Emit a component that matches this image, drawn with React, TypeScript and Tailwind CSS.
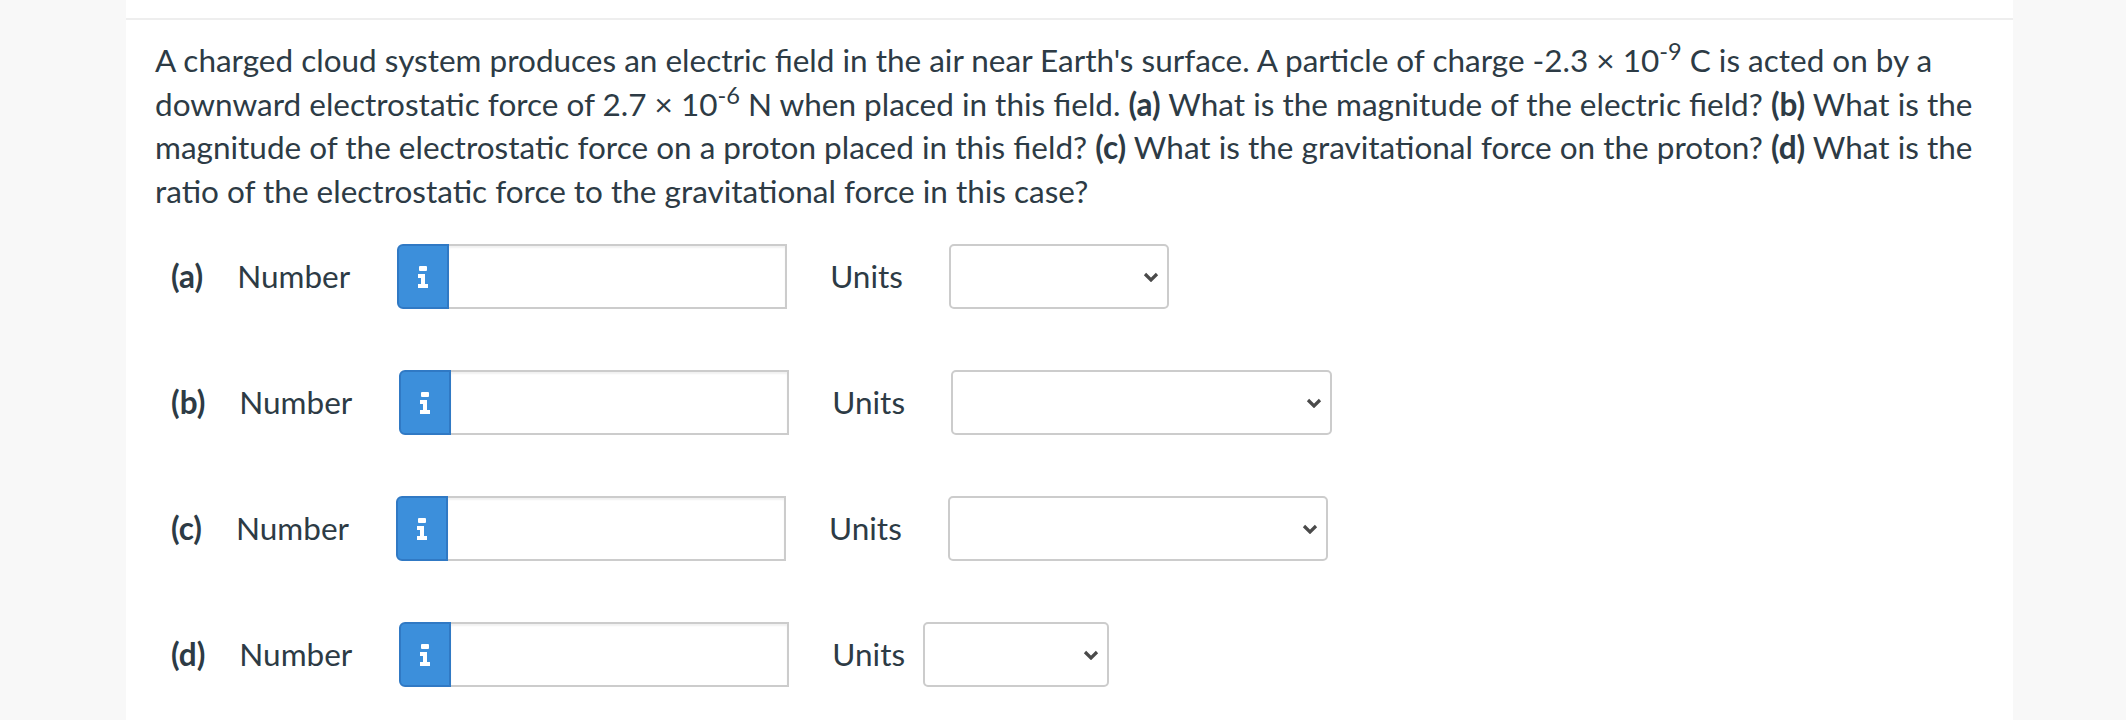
import React from "react";

interface AnswerRow {
  label: string;
  selectWidth: string;
  selectGap: string;
}

const rows: AnswerRow[] = [
  { label: "(a)", selectWidth: "w-[220px]", selectGap: "ml-[46px]" },
  { label: "(b)", selectWidth: "w-[381px]", selectGap: "ml-[46px]" },
  { label: "(c)", selectWidth: "w-[380px]", selectGap: "ml-[46px]" },
  { label: "(d)", selectWidth: "w-[186px]", selectGap: "ml-[18px]" },
];

function InfoGlyph() {
  return (
    <svg width="10" height="22" viewBox="0 0 10 22" fill="#ffffff">
      <rect x="1" y="0" width="8" height="5" rx="1" />
      <path d="M0 8 H7 V18 H10 V22 H0 V18 H3 V12 H0 Z" />
    </svg>
  );
}

function Chevron() {
  return (
    <svg width="16" height="10" viewBox="0 0 16 10" fill="none">
      <polyline points="2,2 8,8 14,2" stroke="#4a4a4a" strokeWidth="3.2" />
    </svg>
  );
}

function Row({ row }: { row: AnswerRow }) {
  return (
    <div className="flex items-center h-[65px] pl-[16px]">
      <span className="font-bold">{row.label}</span>
      <span className="ml-[34px]">Number</span>
      {/* input group: info button + text field */}
      <div className="ml-[47px] flex h-full">
        <button className="w-[52px] h-full flex items-center justify-center bg-[#3c8fdb] border-2 border-[#3079c4] rounded-l-[6px]">
          <InfoGlyph />
        </button>
        <input
          type="text"
          className="w-[338px] h-full bg-white border-2 border-l-0 border-[#cccccc] shadow-[inset_0_2px_2px_rgba(0,0,0,0.06)] outline-none"
        />
      </div>
      <span className="ml-[43px]">Units</span>
      <div
        className={`${row.selectGap} ${row.selectWidth} h-full bg-white border-2 border-[#cccccc] rounded-[5px] flex items-center justify-end pr-[8px]`}
      >
        <Chevron />
      </div>
    </div>
  );
}

export default function App() {
  return (
    <div
      className="min-h-[720px] bg-[#f8f8f8] text-[#2d3b45]"
      style={{ fontFamily: "Lato, 'Open Sans', sans-serif" }}
    >
      <div className="ml-[126px] w-[1887px] min-h-[720px] bg-white pt-[18px]">
        <div className="border-t-2 border-[#eeeeee] px-[29px] pt-[19px]">
          <p className="text-[31.5px] leading-[43.5px] whitespace-nowrap">
            A charged cloud system produces an electric field in the air near Earth's surface. A particle of charge -2.3 × 10<sup>-9</sup> C is acted on by a
            <br />
            downward electrostatic force of 2.7 × 10<sup>-6</sup> N when placed in this field. <b>(a)</b> What is the magnitude of the electric field? <b>(b)</b> What is the
            <br />
            magnitude of the electrostatic force on a proton placed in this field? <b>(c)</b> What is the gravitational force on the proton? <b>(d)</b> What is the
            <br />
            ratio of the electrostatic force to the gravitational force in this case?
          </p>
          <div className="mt-[31px] flex flex-col gap-[61px] text-[31.5px] leading-[43.5px]">
            {rows.map((row) => (
              <Row key={row.label} row={row} />
            ))}
          </div>
        </div>
      </div>
    </div>
  );
}
